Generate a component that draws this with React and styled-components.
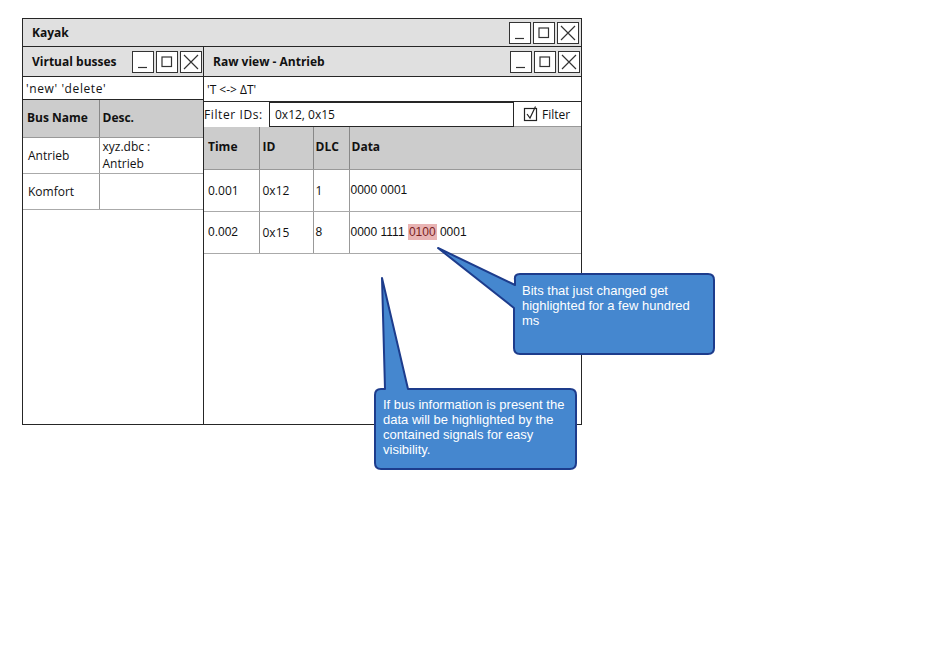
import React from "react";
import styled, { createGlobalStyle } from "styled-components";

const Global = createGlobalStyle`
  html, body { margin: 0; padding: 0; background: #ffffff; }
  * { box-sizing: border-box; }
`;

const SKETCH = `"Open Sans", "Liberation Sans", sans-serif`;
const ARIAL = `"Liberation Sans", Arial, sans-serif`;

const Page = styled.div`
  position: relative;
  width: 946px;
  height: 648px;
  padding: 18px 0 0 22px;
  font-family: ${SKETCH};
  color: #111;
`;

const Window = styled.div`
  width: 560px;
  height: 407px;
  border: 1px solid #262626;
  display: flex;
  flex-direction: column;
  background: #fff;
`;

const TitleBar = styled.div`
  flex: none;
  height: ${(p) => p.$h}px;
  display: flex;
  align-items: center;
  justify-content: space-between;
  padding: 0 ${(p) => p.$pr}px 0 ${(p) => p.$pl}px;
  background: #e0e0e0;
  border-bottom: 1px solid #262626;
  font-weight: 700;
  font-size: 12px;
`;

const BtnGroup = styled.div`
  display: flex;
  gap: 2px;
`;

const WinBtn = styled.div`
  width: 22px;
  height: 22px;
  border: 1px solid #333;
  background: #fff;
  display: flex;
  align-items: center;
  justify-content: center;
  svg { display: block; }
`;

const Body = styled.div`
  flex: 1;
  display: flex;
  min-height: 0;
`;

const Panel = styled.div`
  display: flex;
  flex-direction: column;
  width: ${(p) => (p.$w ? `${p.$w}px` : "auto")};
  flex: ${(p) => (p.$w ? "none" : "1")};
  border-right: ${(p) => (p.$divider ? "1px solid #262626" : "none")};
`;

const Toolbar = styled.div`
  flex: none;
  height: ${(p) => p.$h}px;
  display: flex;
  align-items: center;
  padding-left: 3px;
  border-bottom: 1px solid #262626;
  font-size: 12px;
  letter-spacing: ${(p) => p.$ls || 0}px;
`;

const FilterRow = styled.div`
  flex: none;
  height: 25px;
  display: flex;
  align-items: stretch;
  font-size: 12px;
`;

const FilterLabel = styled.div`
  width: 65px;
  display: flex;
  align-items: center;
  letter-spacing: 0.6px;
`;

const FilterInput = styled.div`
  flex: 1;
  border: 1px solid #262626;
  display: flex;
  align-items: center;
  padding-left: 5px;
`;

const FilterCheck = styled.div`
  width: 67px;
  display: flex;
  align-items: center;
  gap: 3px;
  padding-left: 9px;
  border-bottom: 1px solid #999;
`;

const Table = styled.table`
  border-collapse: collapse;
  width: 100%;
  table-layout: fixed;
  font-size: 12px;
`;

const Th = styled.th`
  background: #cccccc;
  height: ${(p) => p.$h}px;
  text-align: left;
  font-weight: 700;
  padding: 0 3px 2px ${(p) => p.$pl ?? 3}px;
  border-right: 1px solid #888;
  border-bottom: 1px solid #999;
  &:last-child { border-right: none; }
`;

const Td = styled.td`
  height: ${(p) => p.$h}px;
  padding: 0 3px 0 ${(p) => p.$pl ?? 3}px;
  vertical-align: middle;
  line-height: 17px;
  border-right: 1px solid #999;
  border-bottom: 1px solid #aaa;
  font-family: ${(p) => (p.$arial ? ARIAL : SKETCH)};
  &:last-child { border-right: none; }
`;

const Highlight = styled.span`
  background: #e9b4b4;
  color: #7a1f1f;
  padding: 1px 1px;
`;

const Callout = styled.div`
  position: absolute;
  left: ${(p) => p.$x}px;
  top: ${(p) => p.$y}px;
  width: ${(p) => p.$w}px;
  height: ${(p) => p.$h}px;
  svg { position: absolute; left: 0; top: 0; }
`;

const CalloutText = styled.div`
  position: absolute;
  left: ${(p) => p.$tx}px;
  top: ${(p) => p.$ty}px;
  width: ${(p) => p.$tw}px;
  font-family: ${ARIAL};
  font-size: 13px;
  line-height: 15px;
  color: #ffffff;
`;

const Icon = ({ kind }) => (
  <svg width="20" height="20" viewBox="0 0 20 20" fill="none" stroke="#333" strokeWidth="1.2">
    {kind === "min" && <path d="M5 15.5 H14" />}
    {kind === "max" && <rect x="5" y="5" width="9.5" height="9.5" />}
    {kind === "close" && <path d="M3 3 L17 17 M17 3 L3 17" />}
  </svg>
);

const WindowButtons = () => (
  <BtnGroup>
    <WinBtn><Icon kind="min" /></WinBtn>
    <WinBtn><Icon kind="max" /></WinBtn>
    <WinBtn><Icon kind="close" /></WinBtn>
  </BtnGroup>
);

const CheckIcon = () => (
  <svg width="16" height="16" viewBox="0 0 16 16" fill="none" stroke="#222" strokeWidth="1.2">
    <rect x="1.5" y="2.5" width="12" height="12" />
    <path d="M4 8 L7 12 L12.5 0.5" />
  </svg>
);

export default function App() {
  return (
    <Page>
      <Global />
      <Window>
        <TitleBar $h={28} $pl={9} $pr={2}>
          <span>Kayak</span>
          <WindowButtons />
        </TitleBar>
        <Body>
          <Panel $w={181} $divider>
            <TitleBar $h={30} $pl={9} $pr={1}>
              <span>Virtual busses</span>
              <WindowButtons />
            </TitleBar>
            <Toolbar $h={23} $ls={0.6}>'new' 'delete'</Toolbar>
            <Table>
              <colgroup>
                <col style={{ width: 76 }} />
                <col />
              </colgroup>
              <thead>
                <tr>
                  <Th $h={37} $pl={4}>Bus Name</Th>
                  <Th $h={37}>Desc.</Th>
                </tr>
              </thead>
              <tbody>
                <tr>
                  <Td $h={36} $pl={5}>Antrieb</Td>
                  <Td $h={36}>xyz.dbc :<br />Antrieb</Td>
                </tr>
                <tr>
                  <Td $h={36} $pl={5}>Komfort</Td>
                  <Td $h={36}></Td>
                </tr>
              </tbody>
            </Table>
          </Panel>
          <Panel>
            <TitleBar $h={30} $pl={9} $pr={1}>
              <span>Raw view - Antrieb</span>
              <WindowButtons />
            </TitleBar>
            <Toolbar $h={25}>'T &lt;-&gt; ΔT'</Toolbar>
            <FilterRow>
              <FilterLabel>Filter IDs:</FilterLabel>
              <FilterInput>0x12, 0x15</FilterInput>
              <FilterCheck>
                <CheckIcon />
                <span>Filter</span>
              </FilterCheck>
            </FilterRow>
            <Table>
              <colgroup>
                <col style={{ width: 55 }} />
                <col style={{ width: 54 }} />
                <col style={{ width: 36 }} />
                <col />
              </colgroup>
              <thead>
                <tr>
                  <Th $h={42} $pl={4}>Time</Th>
                  <Th $h={42}>ID</Th>
                  <Th $h={42} $pl={2}>DLC</Th>
                  <Th $h={42} $pl={2}>Data</Th>
                </tr>
              </thead>
              <tbody>
                <tr>
                  <Td $h={42} $pl={4}>0.001</Td>
                  <Td $h={42}>0x12</Td>
                  <Td $h={42} $pl={2}>1</Td>
                  <Td $h={42} $pl={1} $arial>0000 0001</Td>
                </tr>
                <tr>
                  <Td $h={42} $pl={4} $arial>0.002</Td>
                  <Td $h={42}>0x15</Td>
                  <Td $h={42} $pl={2} $arial>8</Td>
                  <Td $h={42} $pl={1} $arial>
                    0000 1111 <Highlight>0100</Highlight> 0001
                  </Td>
                </tr>
              </tbody>
            </Table>
          </Panel>
        </Body>
      </Window>

      <Callout $x={436} $y={246} $w={282} $h={112}>
        <svg width="282" height="112" viewBox="0 0 282 112">
          <path
            d="M84 28 H272 Q278 28 278 34 V102 Q278 108 272 108 H84 Q78 108 78 102 V62 L2 2 L79 39 V34 Q78 28 84 28 Z"
            fill="#4587cf"
            stroke="#1d3c8c"
            strokeWidth="2"
            strokeLinejoin="round"
          />
        </svg>
        <CalloutText $tx={86} $ty={37} $tw={182}>
          Bits that just changed get highlighted for a few hundred ms
        </CalloutText>
      </Callout>

      <Callout $x={373} $y={276} $w={206} $h={196}>
        <svg width="206" height="196" viewBox="0 0 206 196">
          <path
            d="M8 113 H12 L9 2 L35 113 H197 Q203 113 203 119 V187 Q203 193 197 193 H8 Q2 193 2 187 V119 Q2 113 8 113 Z"
            fill="#4587cf"
            stroke="#1d3c8c"
            strokeWidth="2"
            strokeLinejoin="round"
          />
        </svg>
        <CalloutText $tx={10} $ty={121} $tw={190}>
          If bus information is present the data will be highlighted by the contained signals for easy visibility.
        </CalloutText>
      </Callout>
    </Page>
  );
}
